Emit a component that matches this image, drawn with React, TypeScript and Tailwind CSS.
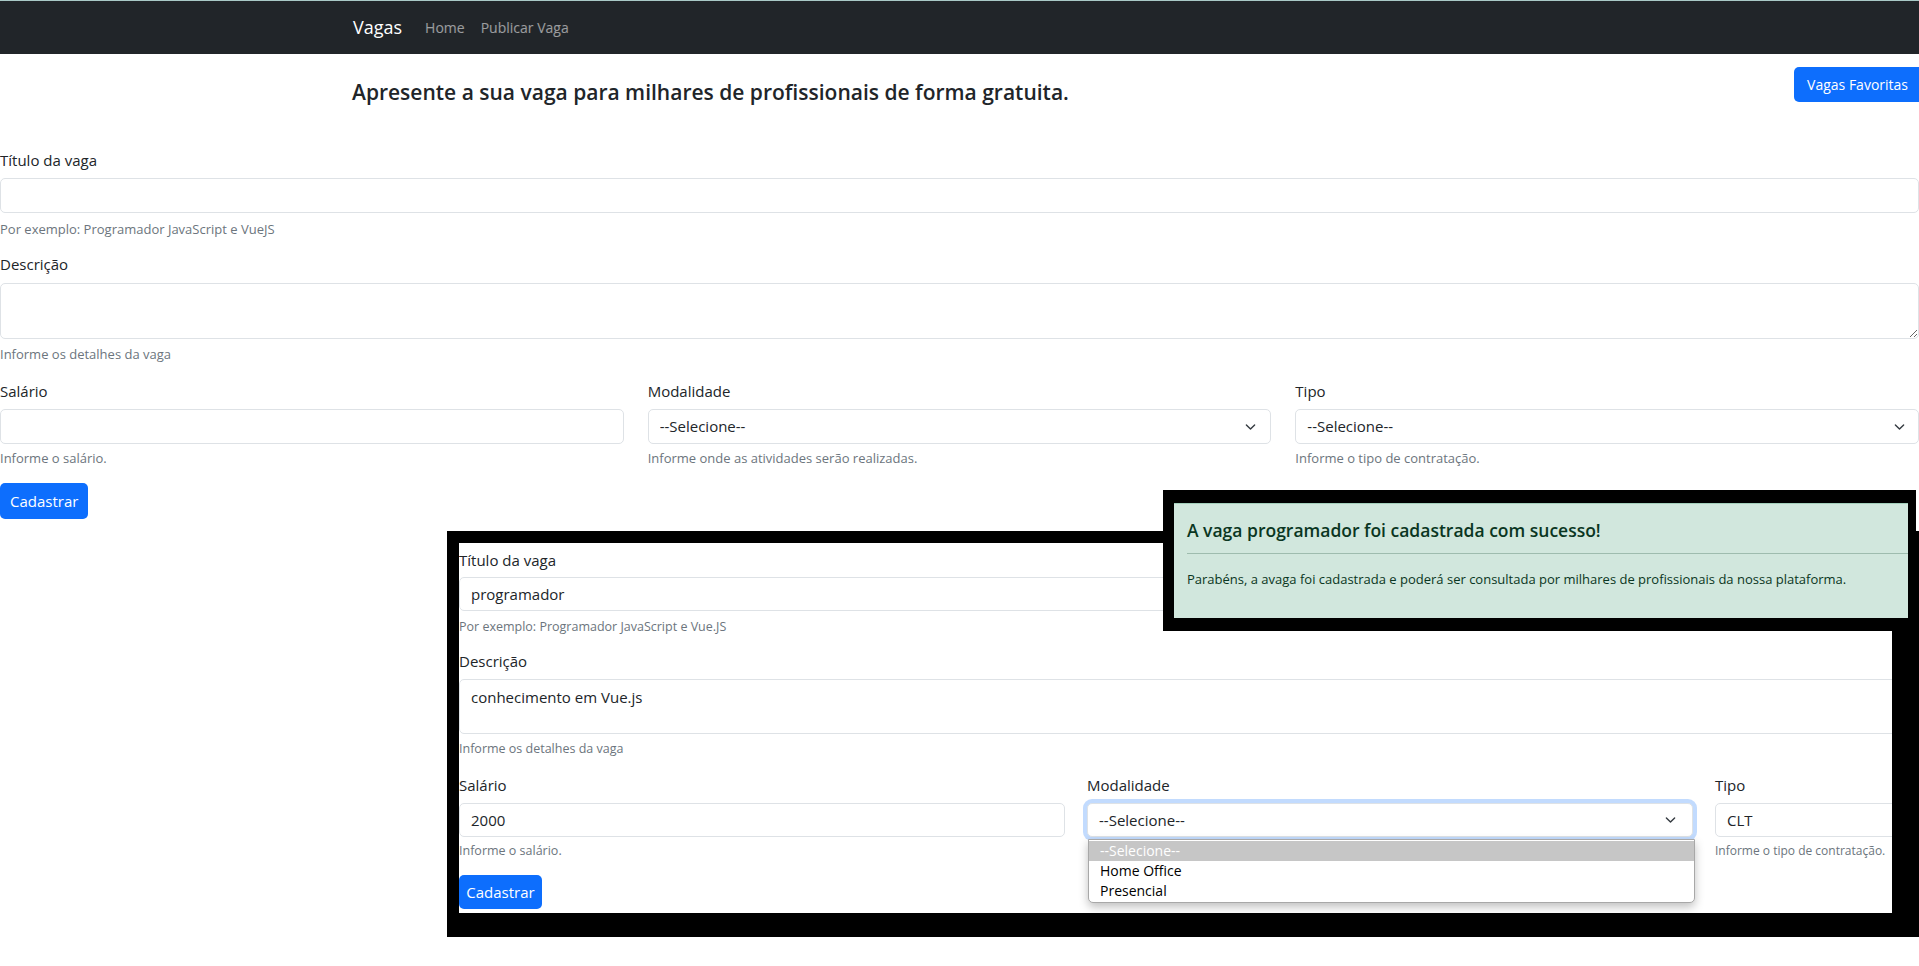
import React from "react";

const font = "font-['Segoe_UI','Open_Sans',sans-serif]";

function Chevron({ className = "" }: { className?: string }) {
  return (
    <svg
      viewBox="0 0 16 10"
      preserveAspectRatio="none"
      className={`pointer-events-none absolute top-1/2 h-[7px] w-[11px] -translate-y-1/2 ${className}`}
      fill="none"
      stroke="#343a40"
      strokeWidth="2"
      strokeLinecap="round"
      strokeLinejoin="round"
    >
      <path d="M2 2l6 6 6-6" />
    </svg>
  );
}

// campos do formulário principal
const box =
  "block w-full rounded-[5px] border border-[#dee2e6] bg-white px-[11px] text-[15px] text-[#212529] outline-none";

function MainForm() {
  return (
    <form className="mt-[43px]">
      <label className="block text-[15px] leading-[22px]">Título da vaga</label>
      <input className={`${box} mt-[7px] h-[35px]`} />
      <div className="mt-[7px] text-[13px] leading-[18px] text-[#6c757d]">
        Por exemplo: Programador JavaScript e VueJS
      </div>

      <label className="mt-[15px] block text-[15px] leading-[22px]">Descrição</label>
      <textarea className={`${box} mt-[8px] h-[56px] py-[6px]`} />
      <div className="mt-[6px] text-[13px] leading-[18px] text-[#6c757d]">
        Informe os detalhes da vaga
      </div>

      <div className="mt-[17px] grid grid-cols-3 gap-x-6">
        <div>
          <label className="block text-[15px] leading-[22px]">Salário</label>
          <input className={`${box} mt-[7px] h-[35px]`} />
          <div className="mt-[5px] text-[13px] leading-[18px] text-[#6c757d]">Informe o salário.</div>
        </div>
        <div>
          <label className="block text-[15px] leading-[22px]">Modalidade</label>
          <div className="relative mt-[7px]">
            <select className={`${box} h-[35px] appearance-none`}>
              <option>--Selecione--</option>
              <option>Home Office</option>
              <option>Presencial</option>
            </select>
            <Chevron className="right-[15px]" />
          </div>
          <div className="mt-[5px] text-[13px] leading-[18px] text-[#6c757d]">
            Informe onde as atividades serão realizadas.
          </div>
        </div>
        <div>
          <label className="block text-[15px] leading-[22px]">Tipo</label>
          <div className="relative mt-[7px]">
            <select className={`${box} h-[35px] appearance-none`}>
              <option>--Selecione--</option>
              <option>CLT</option>
              <option>PJ</option>
            </select>
            <Chevron className="right-[14px]" />
          </div>
          <div className="mt-[5px] text-[13px] leading-[18px] text-[#6c757d]">
            Informe o tipo de contratação.
          </div>
        </div>
      </div>

      <button
        type="button"
        className="mt-[16px] h-[36px] rounded-[5px] bg-[#0d6efd] px-[10px] text-[15px] text-white"
      >
        Cadastrar
      </button>
    </form>
  );
}

// "print" do formulário preenchido
const fake =
  "flex w-full items-center rounded-[5px] border border-[#dee2e6] bg-white px-[11px] text-[15px] text-[#212529]";

function FormShot() {
  return (
    <div className="absolute left-[447px] top-[531px] h-[406px] w-[1472px] bg-black pb-[24px] pl-[12px] pr-[27px] pt-[12px]">
      <div className="relative h-full w-full overflow-hidden bg-white">
        <div className="w-[1862px]">
          <div className="mt-[6px] text-[15px] leading-[22px]">Título da vaga</div>
          <div className={`${fake} mt-[6px] h-[34px]`}>programador</div>
          <div className="mt-[7px] text-[12.5px] leading-[18px] text-[#6c757d]">
            Por exemplo: Programador JavaScript e Vue.JS
          </div>

          <div className="mt-[14px] text-[15px] leading-[22px]">Descrição</div>
          <div className={`${fake} mt-[7px] h-[55px] items-start pt-[6px]`}>conhecimento em Vue.js</div>
          <div className="mt-[6px] text-[12.5px] leading-[18px] text-[#6c757d]">
            Informe os detalhes da vaga
          </div>

          <div className="mt-[16px] grid grid-cols-3 gap-x-[22px]">
            <div>
              <div className="text-[15px] leading-[22px]">Salário</div>
              <div className={`${fake} mt-[7px] h-[34px]`}>2000</div>
              <div className="mt-[5px] text-[12.5px] leading-[18px] text-[#6c757d]">Informe o salário.</div>
            </div>
            <div>
              <div className="text-[15px] leading-[22px]">Modalidade</div>
              <div className="relative mt-[7px]">
                <div
                  className={`${fake} h-[34px] border-[#86b7fe] shadow-[0_0_0_4px_rgba(13,110,253,0.25)]`}
                >
                  --Selecione--
                </div>
                <Chevron className="right-[17px]" />
              </div>
              {/* fica escondido pela lista aberta */}
              <div className="mt-[5px] h-[18px]" />
            </div>
            <div>
              <div className="text-[15px] leading-[22px]">Tipo</div>
              <div className={`${fake} mt-[7px] h-[34px]`}>CLT</div>
              <div className="mt-[5px] text-[12px] leading-[18px] text-[#6c757d]">
                Informe o tipo de contratação.
              </div>
            </div>
          </div>

          <div className="mt-[15px] flex h-[34px] w-[83px] items-center justify-center rounded-[5px] bg-[#0d6efd] text-[15px] text-white">
            Cadastrar
          </div>
        </div>

        {/* lista aberta do select */}
        <div className="absolute left-[629px] top-[296px] w-[607px] overflow-hidden rounded-b-[5px] border border-[#a8a8a8] bg-white py-px text-[14px] leading-[20px] shadow-[0_4px_10px_rgba(0,0,0,0.25)]">
          <div className="bg-[#c6c6c6] pl-[11px] text-white">--Selecione--</div>
          <div className="pl-[11px] text-black">Home Office</div>
          <div className="pl-[11px] text-black">Presencial</div>
        </div>
      </div>
    </div>
  );
}

function AlertShot() {
  return (
    <div className="absolute left-[1163px] top-[490px] h-[141px] w-[753px] bg-black pb-[13px] pl-[11px] pr-[8px] pt-[13px]">
      <div className="h-full overflow-hidden border-t border-[#a3cfbb] bg-[#d1e7dd] pl-[13px] text-[#0a3622]">
        <div className="mt-[14px] text-[17.5px] font-semibold leading-[24px]">
          A vaga programador foi cadastrada com sucesso!
        </div>
        <div className="mt-[11px] border-t border-[#9ebcae]" />
        <div className="mt-[16px] text-[13px] leading-[18px]">
          Parabéns, a avaga foi cadastrada e poderá ser consultada por milhares de profissionais da nossa
          plataforma.
        </div>
      </div>
    </div>
  );
}

export default function App() {
  return (
    <div className={`relative h-[966px] w-[1919px] overflow-hidden bg-white text-[#212529] ${font}`}>
      <nav className="flex h-[54px] items-center border-t border-[#a9c9c6] bg-[#212529] pl-[353px]">
        <span className="text-[18px] text-white">Vagas</span>
        <span className="ml-[23px] text-[14px] text-white/55">Home</span>
        <span className="ml-[16px] text-[14px] text-white/55">Publicar Vaga</span>
      </nav>

      <div className="flex items-start justify-between">
        <h4 className="ml-[352px] mt-[24px] text-[21px] font-semibold leading-[28px]">
          Apresente a sua vaga para milhares de profissionais de forma gratuita.
        </h4>
        <button
          type="button"
          className="mt-[13px] h-[35px] rounded-l-[5px] bg-[#0d6efd] pl-[13px] pr-[11px] text-[14px] text-white"
        >
          Vagas Favoritas
        </button>
      </div>

      <MainForm />
      <FormShot />
      <AlertShot />
    </div>
  );
}
